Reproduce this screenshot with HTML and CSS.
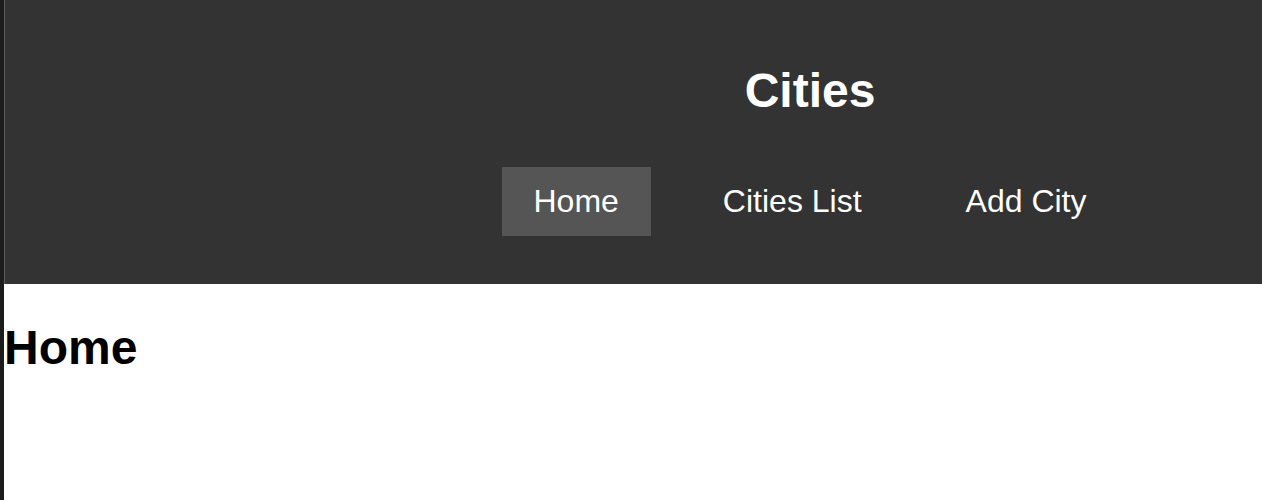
FILE: index.html
```html
<!DOCTYPE html>
<html lang="en">
<head>
<meta charset="utf-8">
<title>Cities</title>
<link rel="stylesheet" href="styles.css">
</head>
<body>
<div class="edge"></div>
<header class="site-header">
  <h1 class="site-title">Cities</h1>
  <nav class="nav">
    <a class="nav-link active" href="#">Home</a>
    <a class="nav-link" href="#">Cities List</a>
    <a class="nav-link" href="#">Add City</a>
  </nav>
</header>
<main class="content">
  <h1 class="page-title">Home</h1>
</main>
</body>
</html>
```
FILE: styles.css
```css
html, body {
  margin: 0;
  padding: 0;
  background: #ffffff;
  font-family: "Liberation Sans", Arial, Helvetica, sans-serif;
}
body {
  padding-left: 4px;
}
.edge {
  position: fixed;
  left: 0;
  top: 0;
  bottom: 0;
  width: 4px;
  background: #1c1c1c;
}
.site-header {
  background: #333333;
  border-left: 1px solid #5e5e5e;
  padding: 63px 0 48px 353px;
  display: flex;
  flex-direction: column;
  align-items: center;
}
.site-title {
  margin: 0 0 49px;
  color: #ffffff;
  font-size: 48px;
  font-weight: bold;
}
.nav {
  display: flex;
  gap: 40px;
}
.nav-link {
  color: #ffffff;
  text-decoration: none;
  font-size: 32px;
  padding: 16px 32px;
}
.nav-link.active {
  background: #555555;
}
.content {
  padding: 0;
}
.page-title {
  margin: 36px 0 0;
  font-size: 48px;
  font-weight: bold;
  color: #000000;
}
```
